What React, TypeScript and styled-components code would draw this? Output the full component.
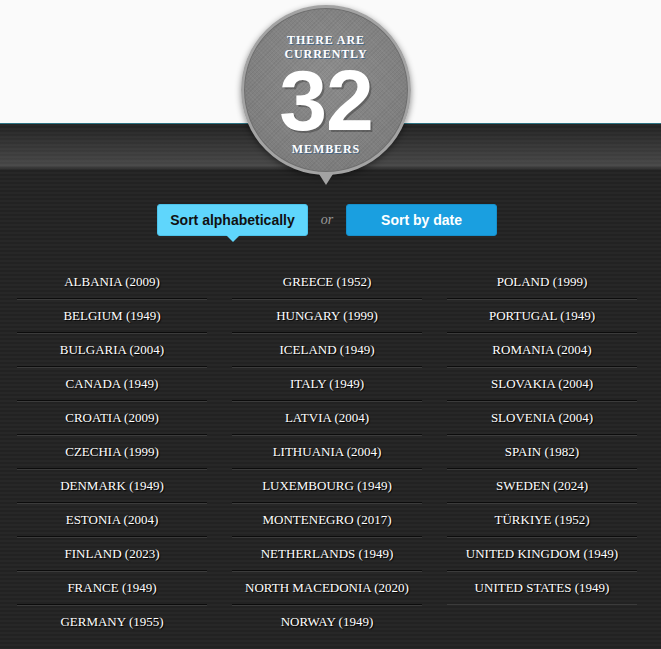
import React, {useState} from 'react';
import styled, {createGlobalStyle, css} from "styled-components";

const GlobalStyle = createGlobalStyle`
  html, body {
    margin: 0;
    padding: 0;
    background: #222;
  }

  body {
    font-family: "Liberation Serif", serif;
    overflow: hidden;
  }
`

const Page = styled.div`
  width: 661px;
  height: 649px;
  display: flex;
  flex-direction: column;
`

const Header = styled.div`
  position: relative;
  height: 123px;
  flex-shrink: 0;
  background: #fafafa;
  border-bottom: 1px solid #2d7484;
`

const Badge = styled.div`
  position: absolute;
  left: 241px;
  top: 5px;
  width: 170px;
  height: 170px;
  box-sizing: border-box;
  border-radius: 50%;
  border: 3px solid #a3a3a3;
  background: repeating-linear-gradient(45deg, rgba(255, 255, 255, .04) 0 1px, transparent 1px 3px),
  repeating-linear-gradient(-45deg, rgba(0, 0, 0, .05) 0 1px, transparent 1px 3px),
  radial-gradient(circle at 50% 40%, #8c8c8c 0%, #808080 60%, #777 100%);
  box-shadow: 0 2px 6px rgba(0, 0, 0, .45), inset 0 0 0 1px #6e6e6e;
  z-index: 2;
  display: flex;
  flex-direction: column;
  align-items: center;
  color: #fff;

  &::after {
    content: '';
    position: absolute;
    left: 50%;
    bottom: -13px;
    margin-left: -7px;
    border-left: 7px solid transparent;
    border-right: 7px solid transparent;
    border-top: 11px solid #a3a3a3;
  }
`

const Caption = styled.span<{ $top: number }>`
  margin-top: ${({$top}) => $top}px;
  font-family: "Liberation Serif", serif;
  font-weight: bold;
  font-size: 12px;
  line-height: 13.8px;
  text-align: center;
  letter-spacing: .9px;
  text-shadow: 1px 1px 0 rgba(40, 90, 140, .7);
`

const Count = styled.span`
  margin-top: 6px;
  font-family: "Liberation Sans", sans-serif;
  font-weight: 900;
  font-size: 86px;
  line-height: 64px;
  letter-spacing: -1px;
  text-shadow: 2px 2px 0 rgba(0, 0, 0, .25);
`

const Body = styled.div`
  flex: 1;
  background: linear-gradient(to bottom, rgba(255, 255, 255, 0) 0px, rgba(255, 255, 255, .12) 30px, rgba(255, 255, 255, .17) 42px, rgba(0, 0, 0, 0) 46px, rgba(0, 0, 0, 0) 100%),
  repeating-linear-gradient(to bottom, #272727 0 2px, #222 2px 4px);
  display: flex;
  flex-direction: column;
  padding-top: 80px;
`

const Controls = styled.div`
  display: flex;
  justify-content: center;
  align-items: center;
  gap: 10px;
  padding-right: 7px;
`

const SortButton = styled.button<{ $active: boolean }>`
  position: relative;
  width: 151px;
  height: 32px;
  border: 1px solid #1690cc;
  border-radius: 3px;
  background: #1a9fe0;
  color: #fff;
  font-family: "Liberation Sans", sans-serif;
  font-weight: bold;
  font-size: 14px;
  cursor: pointer;

  ${({$active}) => $active && css`
    background: #5fd6fc;
    border-color: #4cc3ea;
    color: #111;

    &::after {
      content: '';
      position: absolute;
      left: 50%;
      bottom: -7px;
      margin-left: -7px;
      border-left: 7px solid transparent;
      border-right: 7px solid transparent;
      border-top: 7px solid #5fd6fc;
    }
  `}
`

const Or = styled.span`
  width: 18px;
  text-align: center;
  font-style: italic;
  font-size: 14px;
  color: #9a9a9a;
`

const Columns = styled.div`
  display: grid;
  grid-template-columns: repeat(3, 190px);
  column-gap: 25px;
  padding: 30px 0 0 17px;
`

const Column = styled.ul<{ $tail?: boolean }>`
  list-style: none;
  margin: 0;
  padding: 0;

  ${({$tail}) => $tail && css`
    &::after {
      content: '';
      display: block;
      border-top: 1px solid #3b3b3b;
    }
  `}
`

const Country = styled.li`
  height: 32px;
  line-height: 32px;
  text-align: center;
  font-size: 13px;
  color: #fff;
  text-transform: uppercase;
  text-shadow: 1px 1px 1px #000;
  border-top: 1px solid #3b3b3b;
  border-bottom: 1px solid #0c0c0c;

  &:first-child {
    border-top: none;
  }

  &:last-child {
    border-bottom: none;
  }
`

const members = [
	['Albania', 2009], ['Belgium', 1949], ['Bulgaria', 2004], ['Canada', 1949], ['Croatia', 2009],
	['Czechia', 1999], ['Denmark', 1949], ['Estonia', 2004], ['Finland', 2023], ['France', 1949],
	['Germany', 1955], ['Greece', 1952], ['Hungary', 1999], ['Iceland', 1949], ['Italy', 1949],
	['Latvia', 2004], ['Lithuania', 2004], ['Luxembourg', 1949], ['Montenegro', 2017], ['Netherlands', 1949],
	['North Macedonia', 2020], ['Norway', 1949], ['Poland', 1999], ['Portugal', 1949], ['Romania', 2004],
	['Slovakia', 2004], ['Slovenia', 2004], ['Spain', 1982], ['Sweden', 2024], ['Türkiye', 1952],
	['United Kingdom', 1949], ['United States', 1949],
] as [string, number][]

const App = () => {

	const [byDate, setByDate] = useState(false)

	const sorted = byDate
		? [...members].sort((a, b) => a[1] - b[1] || a[0].localeCompare(b[0]))
		: members

	const columns = [sorted.slice(0, 11), sorted.slice(11, 22), sorted.slice(22)]

	return (
		<Page>
			<GlobalStyle/>
			<Header>
				<Badge>
					<Caption $top={26}>THERE ARE<br/>CURRENTLY</Caption>
					<Count>{members.length}</Count>
					<Caption $top={11}>MEMBERS</Caption>
				</Badge>
			</Header>
			<Body>
				<Controls>
					<SortButton $active={!byDate} onClick={() => setByDate(false)}>Sort alphabetically</SortButton>
					<Or>or</Or>
					<SortButton $active={byDate} onClick={() => setByDate(true)}>Sort by date</SortButton>
				</Controls>
				<Columns>
					{columns.map((col, i) => (
						<Column key={i} $tail={col.length < 11}>
							{col.map(([name, year]) => (
								<Country key={name}>{name} ({year})</Country>
							))}
						</Column>
					))}
				</Columns>
			</Body>
		</Page>
	);
};

export default App;
